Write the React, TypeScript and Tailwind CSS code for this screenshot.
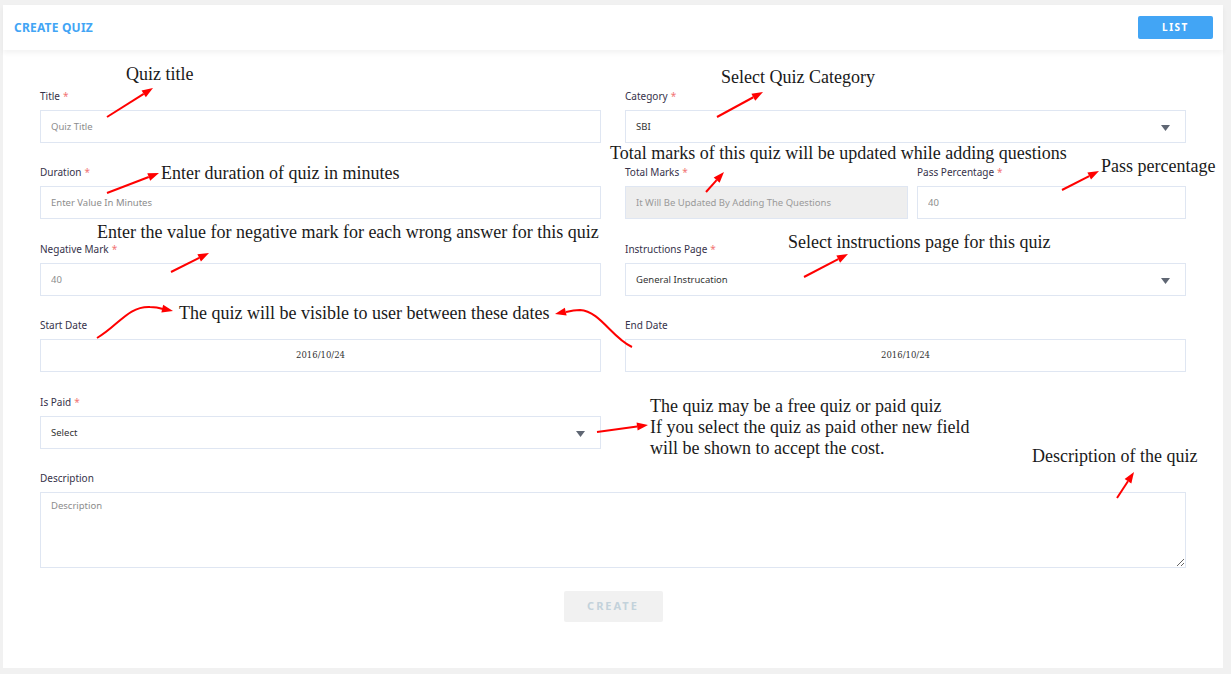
import React from 'react';

const uiFont = { fontFamily: '"Noto Sans", "Open Sans", sans-serif' };
const noteFont = { fontFamily: '"Liberation Serif", "Times New Roman", serif' };

interface Pt {
  x: number;
  y: number;
}

// arrow head as a polygon, pointing along dir at tip
function headPoints(tip: Pt, from: Pt, len = 11, half = 4) {
  const dx = tip.x - from.x;
  const dy = tip.y - from.y;
  const l = Math.hypot(dx, dy) || 1;
  const ux = dx / l;
  const uy = dy / l;
  const bx = tip.x - ux * len;
  const by = tip.y - uy * len;
  return {
    base: { x: bx, y: by },
    pts: `${tip.x},${tip.y} ${bx - uy * half},${by + ux * half} ${bx + uy * half},${by - ux * half}`,
  };
}

function Arrow({ from, to }: { from: Pt; to: Pt }) {
  const { base, pts } = headPoints(to, from);
  return (
    <g>
      <line x1={from.x} y1={from.y} x2={base.x} y2={base.y} stroke="#ff0000" strokeWidth={2} />
      <polygon points={pts} fill="#ff0000" />
    </g>
  );
}

function CurvedArrow({ d, tip, dirFrom }: { d: string; tip: Pt; dirFrom: Pt }) {
  const { pts } = headPoints(tip, dirFrom);
  return (
    <g>
      <path d={d} stroke="#ff0000" strokeWidth={2} fill="none" />
      <polygon points={pts} fill="#ff0000" />
    </g>
  );
}

const straightArrows: { from: Pt; to: Pt }[] = [
  { from: { x: 107, y: 117 }, to: { x: 153, y: 88 } },
  { from: { x: 717, y: 117 }, to: { x: 763, y: 92 } },
  { from: { x: 107, y: 193 }, to: { x: 159, y: 173 } },
  { from: { x: 706, y: 192 }, to: { x: 724, y: 172 } },
  { from: { x: 1062, y: 190 }, to: { x: 1099, y: 171 } },
  { from: { x: 171, y: 272 }, to: { x: 209, y: 253 } },
  { from: { x: 804, y: 277 }, to: { x: 848, y: 254 } },
  { from: { x: 597, y: 432 }, to: { x: 648, y: 425 } },
  { from: { x: 1117, y: 498 }, to: { x: 1134, y: 472 } },
];

const notes: { text: string; left: number; top: number }[] = [
  { text: 'Quiz title', left: 126, top: 64 },
  { text: 'Select Quiz Category', left: 721, top: 67 },
  { text: 'Enter duration of quiz in minutes', left: 161, top: 163 },
  { text: 'Total marks of this quiz will be updated while adding questions', left: 610, top: 143 },
  { text: 'Pass percentage', left: 1101, top: 156 },
  { text: 'Enter the value for negative mark for each wrong answer for this quiz', left: 97, top: 222 },
  { text: 'Select instructions page for this quiz', left: 788, top: 232 },
  { text: 'The quiz will be visible to user between these dates', left: 179, top: 303 },
  { text: 'Description of the quiz', left: 1032, top: 446 },
];

function Label({ text, required }: { text: string; required?: boolean }) {
  return (
    <div className="h-[14px] leading-[14px] text-[10px] text-[#36324a] mb-[7px]">
      {text}
      {required && <span className="text-[#f27474] ml-[3px]">*</span>}
    </div>
  );
}

function TextField({
  label,
  required,
  placeholder,
  disabled,
}: {
  label: string;
  required?: boolean;
  placeholder: string;
  disabled?: boolean;
}) {
  return (
    <div>
      <Label text={label} required={required} />
      <input
        readOnly
        placeholder={placeholder}
        className={`block w-full h-[33px] border border-[#dfe6f2] px-[10px] text-[9.5px] outline-none placeholder:text-[#8c8c8c] ${
          disabled ? 'bg-[#eeeeee] placeholder:text-[#9a9a9a]' : 'bg-white'
        }`}
        style={uiFont}
      />
    </div>
  );
}

function SelectField({ label, required, value }: { label: string; required?: boolean; value: string }) {
  return (
    <div>
      <Label text={label} required={required} />
      <div className="flex items-center justify-between h-[33px] border border-[#dfe6f2] bg-white pl-[10px] pr-[15px] pt-[2px] text-[9.5px] text-[#333]">
        <span>{value}</span>
        <svg width="9" height="6" viewBox="0 0 9 6">
          <polygon points="0,0 9,0 4.5,6" fill="#5f6673" />
        </svg>
      </div>
    </div>
  );
}

function DateField({ label, value }: { label: string; value: string }) {
  return (
    <div>
      <Label text={label} />
      <div
        className="flex items-center justify-center h-[33px] border border-[#dfe6f2] bg-white text-[8.5px] text-[#333]"
        style={{ fontFamily: '"DejaVu Serif", serif' }}
      >
        {value}
      </div>
    </div>
  );
}

export default function App() {
  return (
    <div className="relative min-h-[674px] bg-[#f1f1f1] pt-[5px] pl-[3px] pr-[8px] pb-[6px]" style={uiFont}>
      <div className="bg-white w-[1220px] min-h-[663px]">
        {/* header */}
        <div className="flex items-center justify-between h-[45px] pl-[11px] pr-[10px] shadow-[0_3px_5px_rgba(0,0,0,0.05)]">
          <span className="text-[12px] font-bold text-[#42a5f5] tracking-[0.2px]">CREATE QUIZ</span>
          <button className="w-[75px] h-[23px] rounded-[2px] bg-[#42a5f5] text-white text-[10px] font-bold tracking-[1.5px]">
            LIST
          </button>
        </div>

        {/* form */}
        <div className="pt-[39px] px-[37px] pb-[46px]">
          <div className="grid grid-cols-2 gap-x-[24px]">
            <TextField label="Title" required placeholder="Quiz Title" />
            <SelectField label="Category" required value="SBI" />

            <div className="mt-[22px]">
              <TextField label="Duration" required placeholder="Enter Value In Minutes" />
            </div>
            <div className="mt-[22px] grid grid-cols-[283px_1fr] gap-x-[9px]">
              <TextField label="Total Marks" required placeholder="It Will Be Updated By Adding The Questions" disabled />
              <TextField label="Pass Percentage" required placeholder="40" />
            </div>

            <div className="mt-[23px]">
              <TextField label="Negative Mark" required placeholder="40" />
            </div>
            <div className="mt-[23px]">
              <SelectField label="Instructions Page" required value="General Instrucation" />
            </div>

            <div className="mt-[22px]">
              <DateField label="Start Date" value="2016/10/24" />
            </div>
            <div className="mt-[22px]">
              <DateField label="End Date" value="2016/10/24" />
            </div>

            <div className="mt-[23px]">
              <SelectField label="Is Paid" required value="Select" />
            </div>
            <div />
          </div>

          <div className="mt-[22px]">
            <Label text="Description" />
            <textarea
              readOnly
              placeholder="Description"
              className="block w-full h-[76px] border border-[#dfe6f2] px-[10px] py-[6px] text-[9.5px] outline-none placeholder:text-[#8c8c8c]"
              style={uiFont}
            />
          </div>

          <div className="flex justify-center mt-[23px]">
            <button className="w-[99px] h-[31px] rounded-[2px] bg-[#f1f1f1] text-[11px] font-bold tracking-[2px] text-[#c3d2db]">
              CREATE
            </button>
          </div>
        </div>
      </div>

      {/* annotation layer drawn over the form */}
      <div className="absolute inset-0 pointer-events-none" style={noteFont}>
        <svg className="absolute inset-0" width="1231" height="674">
          {straightArrows.map((a, i) => (
            <Arrow key={i} from={a.from} to={a.to} />
          ))}
          <CurvedArrow
            d="M97 338 C 118 326, 128 306, 150 307 C 156 307, 160 308, 163 309"
            tip={{ x: 173, y: 311 }}
            dirFrom={{ x: 160, y: 308 }}
          />
          <CurvedArrow
            d="M632 347 C 612 338, 600 311, 580 310 C 574 310, 570 311, 566 312"
            tip={{ x: 555, y: 314 }}
            dirFrom={{ x: 568, y: 311 }}
          />
        </svg>
        {notes.map((n) => (
          <div
            key={n.text}
            className="absolute whitespace-nowrap text-[18px] leading-[21px] text-[#1a1a1a]"
            style={{ left: n.left, top: n.top }}
          >
            {n.text}
          </div>
        ))}
        <div className="absolute text-[18px] leading-[21px] text-[#1a1a1a]" style={{ left: 650, top: 396 }}>
          <div>The quiz may be a free quiz or paid quiz</div>
          <div>If you select the quiz as paid other new field</div>
          <div>will be shown to accept the cost.</div>
        </div>
      </div>
    </div>
  );
}
